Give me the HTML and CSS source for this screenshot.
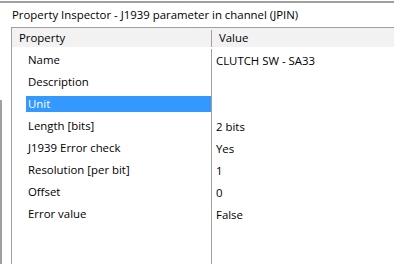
FILE: index.html
```html
<!DOCTYPE html>
<html lang="en">
<head>
    <meta charset="UTF-8">
    <title>Property Inspector</title>
    <link rel="stylesheet" href="styles.css">
</head>
<body>
    <div class="window">
        <div class="edge"></div>
        <div class="panel">
            <div class="title">Property Inspector - J1939 parameter in channel (JPIN)</div>
            <div class="grid">
                <div class="head">
                    <div class="head-name">Property</div>
                    <div class="head-value">Value</div>
                </div>
                <div class="rows">
                    <div class="row"><div class="name"><span>Name</span></div><div class="value">CLUTCH SW - SA33</div></div>
                    <div class="row"><div class="name"><span>Description</span></div><div class="value"></div></div>
                    <div class="row selected"><div class="name"><span>Unit</span></div><div class="value"></div></div>
                    <div class="row"><div class="name"><span>Length [bits]</span></div><div class="value">2 bits</div></div>
                    <div class="row"><div class="name"><span>J1939 Error check</span></div><div class="value">Yes</div></div>
                    <div class="row"><div class="name"><span>Resolution [per bit]</span></div><div class="value">1</div></div>
                    <div class="row"><div class="name"><span>Offset</span></div><div class="value">0</div></div>
                    <div class="row"><div class="name"><span>Error value</span></div><div class="value">False</div></div>
                    <div class="row filler"><div class="name"></div><div class="value"></div></div>
                </div>
            </div>
        </div>
    </div>
</body>
</html>
```

FILE: styles.css
```css
html, body {
    margin: 0;
    height: 100%;
    background: #ffffff;
}
body {
    font-family: "Open Sans", "Noto Sans", sans-serif;
    font-size: 11.4px;
    color: #000;
    overflow: hidden;
}
.window {
    display: flex;
    height: 100%;
    box-sizing: border-box;
    border-top: 2px solid #a0a0a0;
    margin-top: 1px;
}
.edge {
    width: 2px;
    margin-top: 97px;
    background: #a0a0a0;
    flex: none;
}
.panel {
    flex: 1;
    display: flex;
    flex-direction: column;
    padding-left: 9px;
}
.title {
    height: 24px;
    line-height: 24px;
    padding-left: 1px;
    white-space: nowrap;
}
.grid {
    flex: 1;
    display: flex;
    flex-direction: column;
    border-top: 1px solid #a0a0a0;
    border-left: 1px solid #a0a0a0;
}
.head {
    display: flex;
    height: 19px;
    line-height: 19px;
    background: #f2f2f2;
    white-space: nowrap;
}
.head-name {
    width: 199px;
    padding-left: 7px;
    box-sizing: border-box;
}
.head-value {
    flex: 1;
    padding-left: 7px;
    margin-top: 2px;
    line-height: 15px;
    border-left: 1px solid #a0a0a0;
}
.rows {
    flex: 1;
    display: flex;
    flex-direction: column;
    padding-top: 2px;
}
.row {
    display: flex;
    height: 22px;
    align-items: center;
    white-space: nowrap;
}
.row.filler {
    flex: 1;
    align-items: stretch;
}
.name {
    width: 199px;
    padding-left: 14px;
    box-sizing: border-box;
    align-self: stretch;
    display: flex;
    align-items: center;
}
.name span {
    display: block;
    width: 100%;
    height: 16px;
    line-height: 16px;
    padding-left: 2px;
}
.selected .name span {
    background: #3399ff;
    color: #ffffff;
}
.value {
    flex: 1;
    align-self: stretch;
    display: flex;
    align-items: center;
    padding-left: 4px;
    border-left: 1px solid #a0a0a0;
}
```
